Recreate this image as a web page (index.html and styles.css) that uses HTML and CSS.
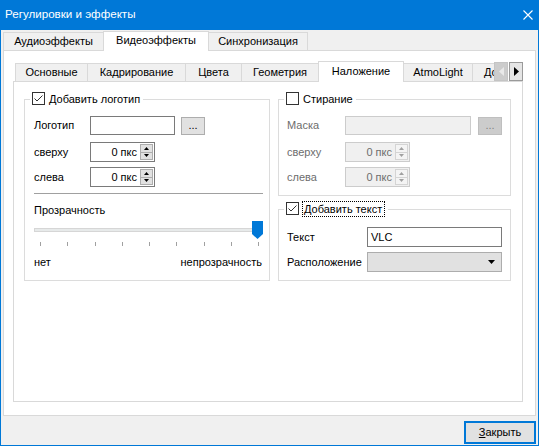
FILE: index.html
```html
<!DOCTYPE html>
<html lang="ru">
<head>
<meta charset="utf-8">
<title>Регулировки и эффекты</title>
<link rel="stylesheet" href="styles.css">
</head>
<body>
<div class="window">
  <div class="titlebar">
    <span class="title">Регулировки и эффекты</span>
    <svg class="close-x" width="10" height="10" viewBox="0 0 10 10"><path d="M0.5 0.5 L9.5 9.5 M9.5 0.5 L0.5 9.5" stroke="#fff" stroke-width="1.1" fill="none"/></svg>
  </div>
  <div class="body">
    <div class="tabbar outer-tabbar">
      <div class="tab ot-audio">Аудиоэффекты</div>
      <div class="tab active ot-video">Видеоэффекты</div>
      <div class="tab ot-sync">Синхронизация</div>
    </div>
    <div class="pane outer-pane">
      <div class="tabbar inner-tabbar">
        <div class="inner-tabs">
          <div class="tab it-basic">Основные</div>
          <div class="tab it-crop">Кадрирование</div>
          <div class="tab it-colors">Цвета</div>
          <div class="tab it-geom">Геометрия</div>
          <div class="tab active it-overlay">Наложение</div>
          <div class="tab it-atmo">AtmoLight</div>
          <div class="tab it-more">Доп</div>
        </div>
        <div class="scroll-btn scroll-left">
          <svg width="5" height="9" viewBox="0 0 5 9"><path d="M5 0 V9 L0 4.5 Z" fill="#e9e9e9"/></svg>
        </div>
        <div class="scroll-btn scroll-right">
          <svg width="5" height="9" viewBox="0 0 5 9"><path d="M0 0 V9 L5 4.5 Z" fill="#000"/></svg>
        </div>
      </div>
      <div class="pane inner-pane">
        <div class="group group-logo">
          <div class="legend">
            <span class="check">
              <svg width="13" height="13" viewBox="0 0 13 13"><rect x="0.5" y="0.5" width="12" height="12" fill="#fff" stroke="#333"/><path d="M2.5 6.5 L5 9 L10.5 3.5" stroke="#333" stroke-width="1" fill="none"/></svg>
            </span>
            <span>Добавить логотип</span>
          </div>
          <div class="form-row r1">
            <span class="lbl lbl-logo">Логотип</span>
            <span class="field f-logo"></span>
            <span class="dots-btn">...</span>
          </div>
          <div class="form-row r2">
            <span class="lbl lbl-logo">сверху</span>
            <span class="spin">
              <span class="spin-val">0 пкс</span>
              <span class="spin-btns">
                <span class="spin-b"><svg width="5" height="3" viewBox="0 0 5 3"><path d="M0 3 L2.5 0 L5 3 Z" fill="#000"/></svg></span>
                <span class="spin-b"><svg width="5" height="3" viewBox="0 0 5 3"><path d="M0 0 L2.5 3 L5 0 Z" fill="#000"/></svg></span>
              </span>
            </span>
          </div>
          <div class="form-row r3">
            <span class="lbl lbl-logo">слева</span>
            <span class="spin">
              <span class="spin-val">0 пкс</span>
              <span class="spin-btns">
                <span class="spin-b"><svg width="5" height="3" viewBox="0 0 5 3"><path d="M0 3 L2.5 0 L5 3 Z" fill="#000"/></svg></span>
                <span class="spin-b"><svg width="5" height="3" viewBox="0 0 5 3"><path d="M0 0 L2.5 3 L5 0 Z" fill="#000"/></svg></span>
              </span>
            </span>
          </div>
          <div class="separator"></div>
          <div class="caption">Прозрачность</div>
          <div class="slider">
            <div class="track"></div>
            <svg class="thumb" width="11" height="18" viewBox="0 0 11 18"><path d="M0 0 H11 V13 L5.5 18 L0 13 Z" fill="#0078d7"/></svg>
          </div>
          <div class="ticks">
            <span></span><span></span><span></span><span></span><span></span><span></span><span></span><span></span><span></span>
          </div>
          <div class="range-labels">
            <span>нет</span>
            <span>непрозрачность</span>
          </div>
        </div>

        <div class="col-right">
          <div class="group group-erase">
            <div class="legend">
              <span class="check">
                <svg width="13" height="13" viewBox="0 0 13 13"><rect x="0.5" y="0.5" width="12" height="12" fill="#fff" stroke="#333"/></svg>
              </span>
              <span>Стирание</span>
            </div>
            <div class="form-row r1">
              <span class="lbl lbl-erase disabled">Маска</span>
              <span class="field f-mask disabled"></span>
              <span class="dots-btn disabled">...</span>
            </div>
            <div class="form-row r2">
              <span class="lbl lbl-erase disabled">сверху</span>
              <span class="spin disabled">
                <span class="spin-val">0 пкс</span>
                <span class="spin-btns">
                  <span class="spin-b"><svg width="5" height="3" viewBox="0 0 5 3"><path d="M0 3 L2.5 0 L5 3 Z" fill="#a0a0a0"/></svg></span>
                  <span class="spin-b"><svg width="5" height="3" viewBox="0 0 5 3"><path d="M0 0 L2.5 3 L5 0 Z" fill="#a0a0a0"/></svg></span>
                </span>
              </span>
            </div>
            <div class="form-row r3">
              <span class="lbl lbl-erase disabled">слева</span>
              <span class="spin disabled">
                <span class="spin-val">0 пкс</span>
                <span class="spin-btns">
                  <span class="spin-b"><svg width="5" height="3" viewBox="0 0 5 3"><path d="M0 3 L2.5 0 L5 3 Z" fill="#a0a0a0"/></svg></span>
                  <span class="spin-b"><svg width="5" height="3" viewBox="0 0 5 3"><path d="M0 0 L2.5 3 L5 0 Z" fill="#a0a0a0"/></svg></span>
                </span>
              </span>
            </div>
          </div>

          <div class="group group-text">
            <div class="legend">
              <span class="check">
                <svg width="13" height="13" viewBox="0 0 13 13"><rect x="0.5" y="0.5" width="12" height="12" fill="#fff" stroke="#333"/><path d="M2.5 6.5 L5 9 L10.5 3.5" stroke="#333" stroke-width="1" fill="none"/></svg>
              </span>
              <span class="focus-label">Добавить текст</span>
            </div>
            <div class="form-row t1">
              <span class="lbl lbl-text">Текст</span>
              <span class="field f-text">VLC</span>
            </div>
            <div class="form-row t2">
              <span class="lbl lbl-text">Расположение</span>
              <span class="combo">
                <svg width="7" height="4" viewBox="0 0 7 4"><path d="M0 0 H7 L3.5 4 Z" fill="#000"/></svg>
              </span>
            </div>
          </div>
        </div>
      </div>
    </div>
    <div class="footer">
      <div class="btn-close"><span class="accel">З</span>акрыть</div>
    </div>
  </div>
</div>
</body>
</html>
```

FILE: styles.css
```css
* { box-sizing: border-box; }
html, body { margin: 0; padding: 0; }
body {
  width: 539px;
  height: 446px;
  overflow: hidden;
  font-family: "Liberation Sans", Arial, sans-serif;
  font-size: 11px;
  line-height: 16px;
  color: #000;
  background: #f0f0f0;
}
.window {
  width: 539px;
  height: 446px;
  display: flex;
  flex-direction: column;
  border: 1px solid #0078d7;
  border-top: 0;
  background: #f0f0f0;
}
.titlebar {
  height: 30px;
  flex: none;
  background: #0078d7;
  color: #fff;
  display: flex;
  align-items: center;
  justify-content: space-between;
  padding: 0 5px 2px 4px;
}
.title { font-size: 11.6px; }
.close-x { display: block; margin-top: 2px; }

.body {
  flex: 1;
  display: flex;
  flex-direction: column;
  padding: 0 2px;
}

/* tabs */
.tabbar {
  display: flex;
  align-items: flex-end;
  height: 21px;
  flex: none;
  position: relative;
  z-index: 1;
}
.tab {
  flex: none;
  height: 18px;
  margin-bottom: 1px;
  border: 1px solid #d9d9d9;
  border-bottom: 0;
  background: #f0f0f0;
  display: flex;
  align-items: center;
  justify-content: center;
  white-space: nowrap;
  padding-bottom: 1px;
}
.tab + .tab { margin-left: -1px; }
.tab.active {
  background: #fff;
  margin-bottom: 0;
  position: relative;
  z-index: 2;
}
.outer-tabbar .tab.active { height: 20px; padding-bottom: 3px; }
.ot-audio { width: 101px; }
.ot-video { width: 106px; }
.ot-sync { width: 100px; }

.pane {
  border: 1px solid #d9d9d9;
  background: #fff;
  margin-top: -1px;
}
.outer-pane {
  height: 366px;
  flex: none;
  padding: 10px 12px 13px 9px;
  display: flex;
  flex-direction: column;
}
.inner-tabbar { padding-left: 2px; }
.inner-tabs {
  flex: 1;
  min-width: 0;
  height: 21px;
  display: flex;
  align-items: flex-end;
  overflow: hidden;
}
.inner-tabbar .tab.active { height: 21px; padding-bottom: 2px; }
.it-basic { width: 73px; }
.it-crop { width: 99px; }
.it-colors { width: 57px; }
.it-geom { width: 78px; }
.it-overlay { width: 86px; }
.it-atmo { width: 70px; }
.it-more { width: 40px; justify-content: flex-start; padding-left: 11px; }

.scroll-btn {
  flex: none;
  width: 14px;
  height: 19px;
  align-self: flex-start;
  margin-top: 1px;
  display: flex;
  align-items: center;
  justify-content: center;
}
.scroll-left { background: #cccccc; border: 1px solid #c4c4c4; }
.scroll-right { background: #e5e5e5; border: 1px solid #9a9a9a; margin-left: 1px; }

.inner-pane {
  height: 321px;
  flex: none;
  display: flex;
  align-items: flex-start;
  gap: 8px;
  padding: 17px 11px 0 10px;
  position: relative;
  z-index: 0;
}

/* group boxes */
.group {
  position: relative;
  border: 1px solid #dcdcdc;
  background: #fff;
}
.legend {
  position: absolute;
  top: -8px;
  left: 5px;
  height: 13px;
  display: flex;
  align-items: center;
  gap: 4px;
  padding: 0 3px 0 2px;
  background: #fff;
  white-space: nowrap;
}
.check { display: block; width: 13px; height: 13px; }
.check svg { display: block; }
.focus-label {
  border: 1px dotted #000;
  height: 16px;
  padding: 0 2px 0 1px;
  margin-left: -1px;
  line-height: 14px;
}

.group-logo {
  width: 246px;
  padding: 16px 6px 10px 9px;
}
.col-right {
  width: 233px;
  display: flex;
  flex-direction: column;
  gap: 13px;
}
.group-erase { padding: 16px 8px 8px 8px; }
.group-text { padding: 17px 8px 8px 8px; }

.form-row {
  display: flex;
  align-items: center;
  height: 20px;
}
.r2 { margin-top: 6px; }
.r3 { margin-top: 5px; }
.t2 { margin-top: 5px; }
.r1 { align-items: flex-start; }
.lbl { flex: none; padding-bottom: 1px; white-space: nowrap; }
.r1 .lbl { line-height: 19px; }
.lbl-logo { width: 56px; }
.lbl-erase { width: 58px; }
.lbl-text { width: 80px; }
.disabled { color: #6d6d6d; }

.field {
  display: block;
  height: 19px;
  border: 1px solid #7a7a7a;
  background: #fff;
  line-height: 17px;
  padding-left: 3px;
}
.f-logo { width: 85px; }
.f-mask { width: 126px; }
.field.disabled { border-color: #cccccc; background: #f0f0f0; }
.f-text { width: 135px; height: 20px; line-height: 18px; }

.dots-btn {
  width: 24px;
  height: 18px;
  margin-top: 1px;
  margin-left: 6px;
  border: 1px solid #adadad;
  background: #e1e1e1;
  display: flex;
  align-items: center;
  justify-content: center;
  font-size: 11px;
  line-height: 12px;
  padding-bottom: 3px;
}
.dots-btn.disabled {
  margin-left: 7px;
  background: #cccccc;
  border-color: #bfbfbf;
  color: #838383;
}

.spin {
  width: 65px;
  height: 20px;
  border: 1px solid #7a7a7a;
  background: #fff;
  display: flex;
  align-items: center;
}
.spin.disabled { border-color: #cccccc; background: #f0f0f0; }
.spin-val {
  flex: 1;
  text-align: right;
  padding-right: 3px;
  padding-bottom: 1px;
  white-space: nowrap;
}
.spin-btns {
  width: 13px;
  height: 16px;
  margin-right: 1px;
  display: flex;
  flex-direction: column;
}
.spin-b {
  flex: 1;
  border: 1px solid #adadad;
  background: #e1e1e1;
  display: flex;
  align-items: center;
  justify-content: center;
}
.spin-b + .spin-b { border-top: 0; }
.spin-b svg { display: block; }
.spin.disabled .spin-b { border-color: #d4d4d4; background: #f4f4f4; }

.combo {
  width: 135px;
  height: 20px;
  border: 1px solid #adadad;
  background: #e1e1e1;
  display: flex;
  align-items: center;
  justify-content: flex-end;
  padding-right: 6px;
}
.combo svg { display: block; }

.separator {
  height: 1px;
  background: #a0a0a0;
  margin-top: 6px;
}
.caption { margin-top: 8px; }
.slider {
  position: relative;
  height: 18px;
  margin-top: 3px;
}
.track {
  position: absolute;
  left: 0;
  right: 4px;
  top: 7px;
  height: 4px;
  background: #e7eaea;
  border: 1px solid #d6d6d6;
}
.thumb {
  position: absolute;
  right: 0;
  top: 0;
  display: block;
}
.ticks {
  margin-top: 3px;
  height: 4px;
  display: flex;
  justify-content: space-between;
  padding: 0 4px 0 6px;
}
.ticks span { width: 1px; height: 4px; background: #a0a0a0; }
.range-labels {
  margin-top: 8px;
  display: flex;
  justify-content: space-between;
  padding-right: 1px;
}

/* footer */
.footer {
  flex: 1;
  display: flex;
  justify-content: flex-end;
  align-items: flex-start;
  padding-top: 5px;
}
.btn-close {
  width: 72px;
  height: 23px;
  border: 2px solid #0078d7;
  background: #e1e1e1;
  display: flex;
  align-items: center;
  justify-content: center;
  padding-bottom: 1px;
}
.accel { text-decoration: underline; }
```
